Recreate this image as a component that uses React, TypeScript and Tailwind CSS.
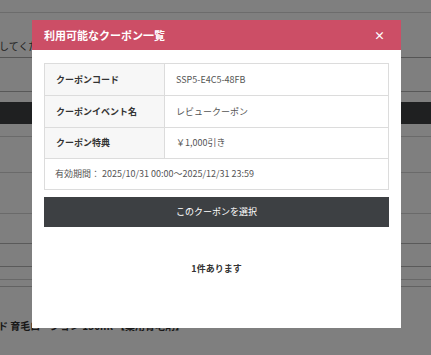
import React from 'react';

const rows = [
  { label: 'クーポンコード', value: 'SSP5-E4C5-48FB', h: 'h-[32px]' },
  { label: 'クーポンイベント名', value: 'レビュークーポン', h: 'h-[32px]' },
  { label: 'クーポン特典', value: '￥1,000引き', h: 'h-[31px]' },
];

function BackgroundPage() {
  return (
    <div className="flex flex-col text-[#333]">
      <div className="h-[13px] border-b border-[#d9d9d9]" />
      <div className="h-[45px] border-b border-[#aaaaaa] flex items-end pb-[4px]">
        <span className="text-[10px] -ml-[1px] text-[#444]">してください</span>
      </div>
      <div className="h-[34px] border-b border-[#b0b0b0]" />
      <div className="h-[10px]" />
      <div className="h-[22px] bg-[#3e4043]" />
      <div className="h-[13px] border-b border-[#d4d4d4]" />
      <div className="h-[36px] border-b border-[#d4d4d4]" />
      <div className="h-[41px] border-b border-[#d4d4d4]" />
      <div className="h-[30px] border-b border-[#b5b5b5]" />
      <div className="h-[23px] border-b border-[#b5b5b5]" />
      <div className="h-[13px] border-b border-[#d0d0d0]" />
      <div className="h-[7px] border-b border-[#c4c4c4]" />
      <div className="pt-[31px] whitespace-nowrap text-[10px] font-bold -ml-[2px]">
        ド 育毛ローション 150ml 【薬用育毛剤】
      </div>
    </div>
  );
}

function CouponModal() {
  return (
    <div className="ml-[32px] mt-[20px] w-[369px] h-[308px] bg-white flex flex-col">
      <div className="h-[30px] bg-[#cc4e66] flex items-center justify-between pl-[12px] pr-[16px]">
        <h2 className="text-white font-bold text-[11px]">利用可能なクーポン一覧</h2>
        <button className="text-white font-bold text-[11px] leading-none">×</button>
      </div>
      <div className="px-[12px] pt-[13px] flex flex-col">
        <div className="border border-[#dcdcdc]">
          {rows.map((row) => (
            <div key={row.label} className={`flex border-b border-[#dcdcdc] ${row.h}`}>
              <div className="w-[120px] shrink-0 bg-[#f7f7f7] border-r border-[#dcdcdc] flex items-center pl-[11px] font-bold text-[9px] text-[#333]">
                {row.label}
              </div>
              <div className="flex items-center pl-[11px] text-[9px] text-[#555]">{row.value}</div>
            </div>
          ))}
          <div className="h-[30px] flex items-center pl-[10px] text-[9px] text-[#555]">
            有効期間： 2025/10/31 00:00～2025/12/31 23:59
          </div>
        </div>
        <button className="mt-[7px] h-[30px] bg-[#3d4043] text-white text-[9px] flex items-center justify-center">
          このクーポンを選択
        </button>
        <p className="mt-[35px] text-center font-bold text-[9px] text-[#333]">1件あります</p>
      </div>
    </div>
  );
}

export default function App() {
  return (
    <div
      className="relative w-[431px] h-[355px] overflow-hidden bg-white"
      style={{ fontFamily: '"Noto Sans CJK JP", "Noto Sans", sans-serif' }}
    >
      <BackgroundPage />
      <div className="absolute inset-0 bg-black/50">
        <CouponModal />
      </div>
    </div>
  );
}
